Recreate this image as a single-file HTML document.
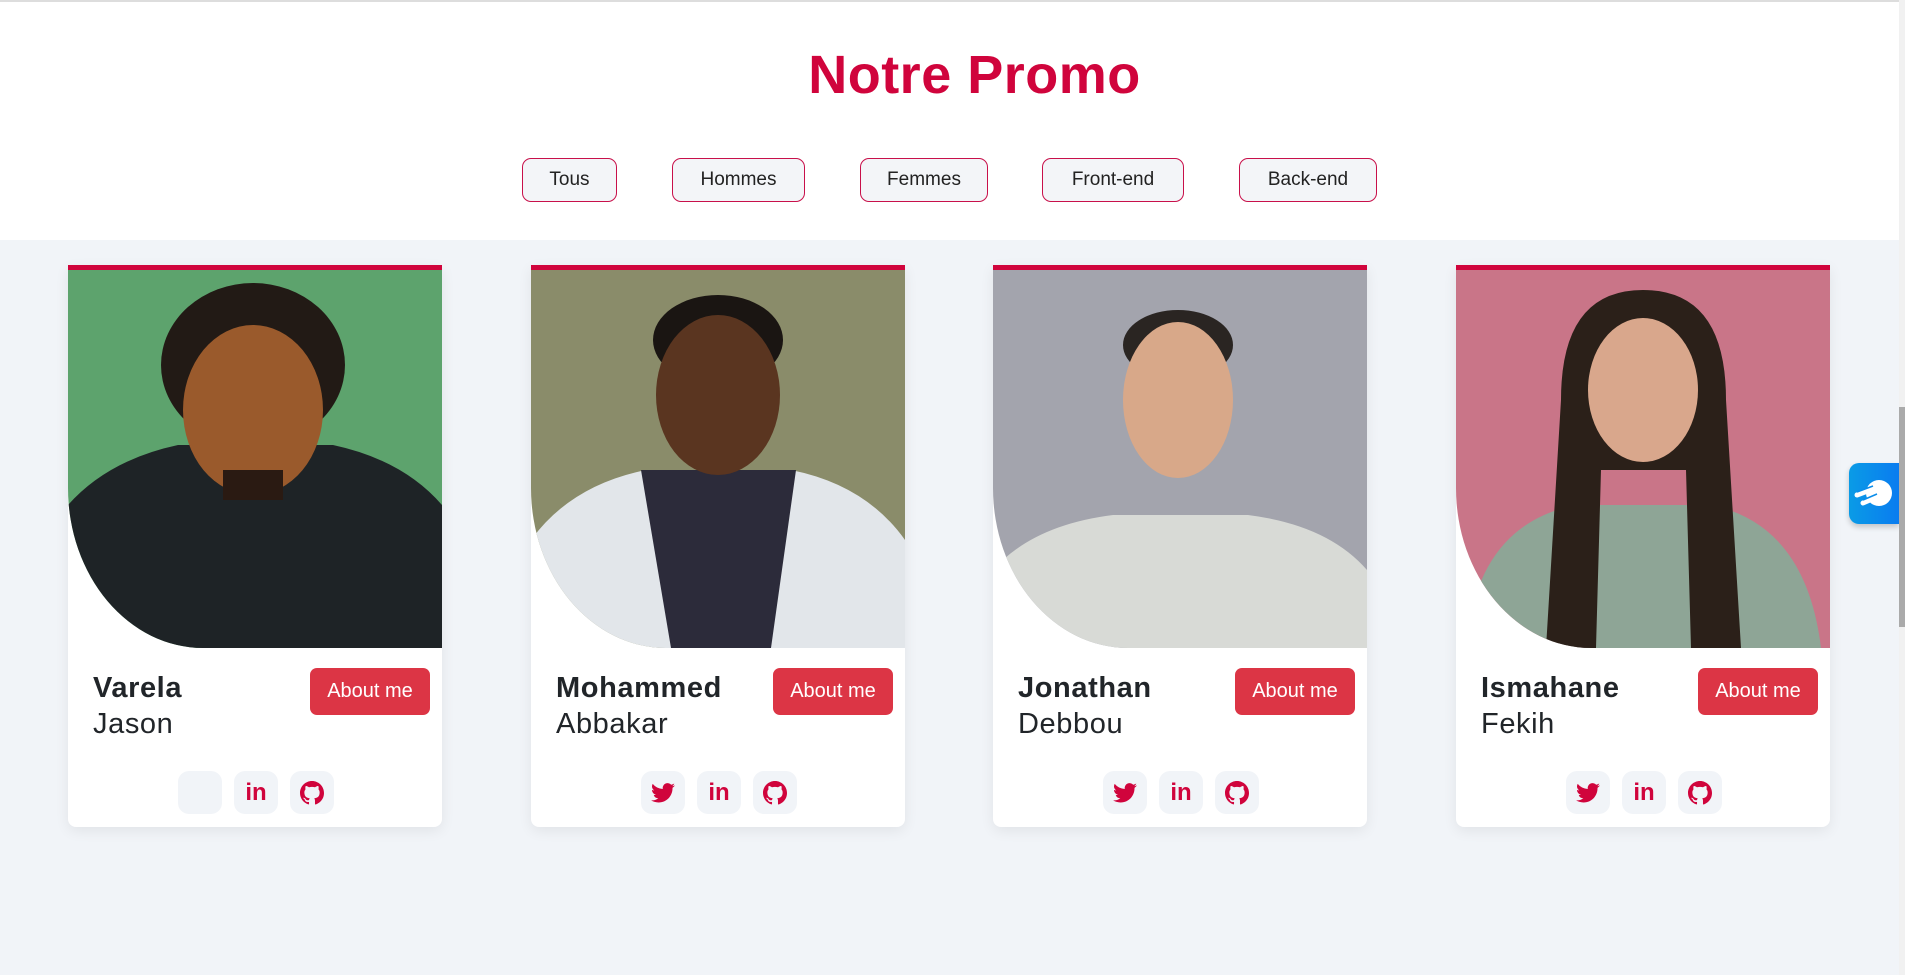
<!DOCTYPE html>
<html><head><meta charset="utf-8"><style>
*{box-sizing:border-box;margin:0;padding:0}
body{width:1905px;height:975px;overflow:hidden;background:#f1f4f8;font-family:"Liberation Sans",sans-serif;position:relative}
.top{position:absolute;left:0;top:0;width:1899px;height:240px;background:#fff;border-top:2px solid #ddd}
h1{position:absolute;top:44px;left:0;width:1949px;text-align:center;color:#d0043c;font-size:54px;font-weight:bold;letter-spacing:0.5px}
.f{position:absolute;top:158px;height:44px;border:1px solid #c8104a;border-radius:9px;background:#f3f5f8;font-size:19px;color:#222;text-align:center;line-height:42px}
.card{position:absolute;top:265px;width:374px;height:562px;background:#fff;border-top:5px solid #d0043c;border-radius:0 0 8px 8px;box-shadow:0 4px 14px rgba(0,0,0,.07);overflow:hidden}
.ph{position:absolute;left:0;top:0;width:374px;height:378px;border-bottom-left-radius:135px 160px;overflow:hidden}
.ph svg{display:block}
.ln{position:absolute;left:25px;top:402px;font-size:29px;font-weight:bold;color:#212529;letter-spacing:0.6px}
.fn{position:absolute;left:25px;top:438px;font-size:29px;color:#212529;letter-spacing:0.6px}
.ab{position:absolute;right:12px;top:398px;width:120px;height:47px;background:#dc3545;border-radius:7px;color:#fff;font-size:20px;text-align:center;line-height:47px}
.ic{position:absolute;top:501px;width:44px;height:43px;background:#f1f4f8;border-radius:11px;display:flex;align-items:center;justify-content:center}
.sb{position:absolute;right:0;top:0;width:6px;height:975px;background:#f1f1f1}
.th{position:absolute;right:0;top:407px;width:6px;height:220px;background:#aaa}
.wg{position:absolute;left:1849px;top:463px;width:50px;height:61px;border-radius:10px 0 0 10px;background:linear-gradient(90deg,#0a9be6,#0a7cf0);box-shadow:0 3px 6px rgba(0,0,0,.2)}
</style></head><body>
<svg width="0" height="0" style="position:absolute"><defs>
<symbol id="gh" viewBox="0 0 16 16"><path fill="#d0043c" d="M8 0C3.58 0 0 3.58 0 8c0 3.54 2.29 6.53 5.47 7.59.4.07.55-.17.55-.38v-1.33c-2.23.48-2.7-1.07-2.7-1.07-.36-.92-.89-1.17-.89-1.17-.73-.5.05-.49.05-.49.8.06 1.23.83 1.23.83.71 1.22 1.87.87 2.33.66.07-.52.28-.87.5-1.07-1.78-.2-3.64-.89-3.64-3.95 0-.87.31-1.59.82-2.15-.08-.2-.36-1.02.08-2.12 0 0 .67-.21 2.2.82a7.6 7.6 0 0 1 4 0c1.53-1.04 2.2-.82 2.2-.82.44 1.1.16 1.92.08 2.12.51.56.82 1.27.82 2.15 0 3.07-1.87 3.75-3.65 3.95.29.25.54.73.54 1.48v2.2c0 .21.15.46.55.38A8 8 0 0 0 16 8c0-4.42-3.58-8-8-8z"/></symbol>
<symbol id="tw" viewBox="0 0 24 20"><path fill="#d0043c" d="M24 2.4a10 10 0 0 1-2.8.8A5 5 0 0 0 23.3.5a10 10 0 0 1-3.1 1.2A4.9 4.9 0 0 0 11.8 6 14 14 0 0 1 1.7.9a4.9 4.9 0 0 0 1.5 6.6A4.9 4.9 0 0 1 1 6.9a4.9 4.9 0 0 0 3.9 4.9 4.9 4.9 0 0 1-2.2.1 4.9 4.9 0 0 0 4.6 3.4A9.9 9.9 0 0 1 0 17.3a14 14 0 0 0 7.5 2.2c9 0 14-7.5 14-14v-.6A10 10 0 0 0 24 2.4z"/></symbol>
</defs></svg>
<div class="top"></div>
<h1>Notre Promo</h1>
<div class="f" style="left:522px;width:95px">Tous</div>
<div class="f" style="left:672px;width:133px">Hommes</div>
<div class="f" style="left:860px;width:128px">Femmes</div>
<div class="f" style="left:1042px;width:142px">Front-end</div>
<div class="f" style="left:1239px;width:138px">Back-end</div>

<div class="card" style="left:68px">
<div class="ph"><svg width="374" height="378"><rect width="374" height="378" fill="#5da36d"/><path d="M0 235 Q40 190 110 175 L265 175 Q335 190 374 235 L374 378 L0 378Z" fill="#1e2326"/><ellipse cx="185" cy="95" rx="92" ry="82" fill="#221a15"/><ellipse cx="185" cy="140" rx="70" ry="85" fill="#9a5a2c"/><rect x="155" y="200" width="60" height="30" fill="#2a1a12"/></svg></div>
<div class="ln">Varela</div><div class="fn">Jason</div><div class="ab">About me</div>
<div class="ic" style="left:110px"></div>
<div class="ic" style="left:166px"><span style="color:#d0043c;font-weight:bold;font-size:24px">in</span></div>
<div class="ic" style="left:222px"><svg width="24" height="24"><use href="#gh"/></svg></div>
</div>

<div class="card" style="left:531px">
<div class="ph"><svg width="374" height="378"><rect width="374" height="378" fill="#8a8c6a"/><path d="M0 270 Q40 215 115 200 L260 200 Q335 215 374 270 L374 378 L0 378Z" fill="#e2e6ea"/><path d="M110 200 L265 200 L240 378 L140 378Z" fill="#2c2b3a"/><ellipse cx="187" cy="70" rx="65" ry="45" fill="#1a1512"/><ellipse cx="187" cy="125" rx="62" ry="80" fill="#5a3520"/></svg></div>
<div class="ln">Mohammed</div><div class="fn">Abbakar</div><div class="ab">About me</div>
<div class="ic" style="left:110px"><svg width="24" height="20"><use href="#tw"/></svg></div>
<div class="ic" style="left:166px"><span style="color:#d0043c;font-weight:bold;font-size:24px">in</span></div>
<div class="ic" style="left:222px"><svg width="24" height="24"><use href="#gh"/></svg></div>
</div>

<div class="card" style="left:993px">
<div class="ph"><svg width="374" height="378"><rect width="374" height="378" fill="#a3a4ad"/><path d="M0 300 Q40 255 120 245 L255 245 Q335 255 374 300 L374 378 L0 378Z" fill="#d8dad6"/><ellipse cx="185" cy="75" rx="55" ry="35" fill="#2a2522"/><ellipse cx="185" cy="130" rx="55" ry="78" fill="#d8a889"/></svg></div>
<div class="ln">Jonathan</div><div class="fn">Debbou</div><div class="ab">About me</div>
<div class="ic" style="left:110px"><svg width="24" height="20"><use href="#tw"/></svg></div>
<div class="ic" style="left:166px"><span style="color:#d0043c;font-weight:bold;font-size:24px">in</span></div>
<div class="ic" style="left:222px"><svg width="24" height="24"><use href="#gh"/></svg></div>
</div>

<div class="card" style="left:1456px">
<div class="ph"><svg width="374" height="378"><rect width="374" height="378" fill="#c97588"/><path d="M10 378 Q20 255 120 235 L255 235 Q350 255 365 378Z" fill="#8ea596"/><path d="M105 130 Q105 20 187 20 Q270 20 270 130 L285 378 L235 378 L230 200 L145 200 L140 378 L90 378Z" fill="#2b2019"/><ellipse cx="187" cy="120" rx="55" ry="72" fill="#d9a78c"/></svg></div>
<div class="ln">Ismahane</div><div class="fn">Fekih</div><div class="ab">About me</div>
<div class="ic" style="left:110px"><svg width="24" height="20"><use href="#tw"/></svg></div>
<div class="ic" style="left:166px"><span style="color:#d0043c;font-weight:bold;font-size:24px">in</span></div>
<div class="ic" style="left:222px"><svg width="24" height="24"><use href="#gh"/></svg></div>
</div>

<div class="wg"><svg width="50" height="61"><circle cx="30" cy="30" r="13" fill="#fff"/><g stroke="#fff" stroke-width="5" stroke-linecap="round"><line x1="8" y1="32" x2="24" y2="26"/><line x1="14" y1="40" x2="28" y2="34"/></g><g stroke="#0a8ceb" stroke-width="1.5"><line x1="8" y1="29" x2="24" y2="23"/><line x1="14" y1="37" x2="28" y2="31"/></g></svg></div>
<div class="sb"></div><div class="th"></div>
</body></html>
